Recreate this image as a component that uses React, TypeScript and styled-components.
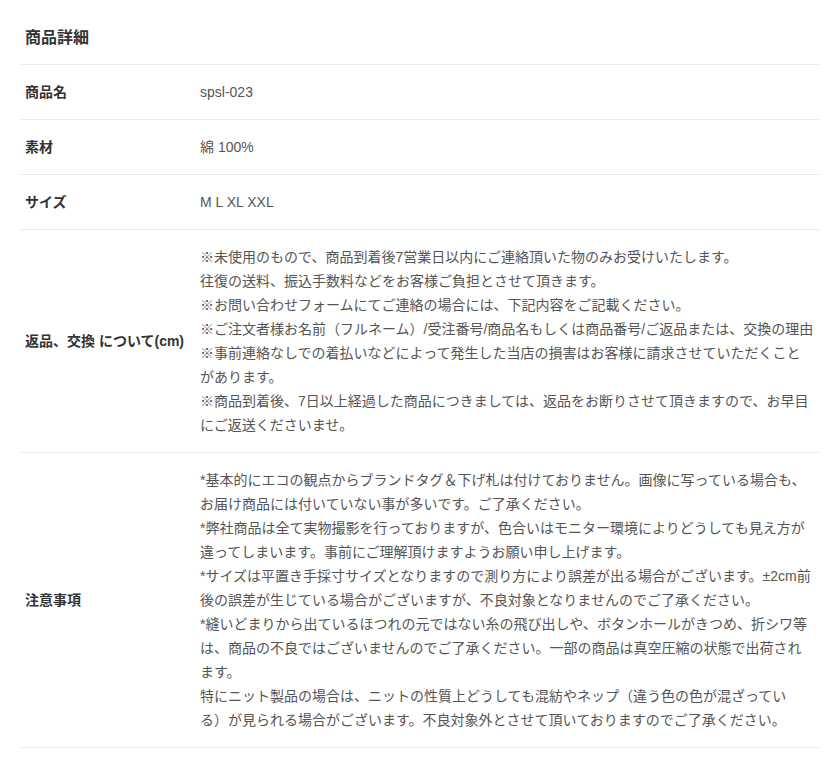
import * as React from 'react';
import styled, { createGlobalStyle } from 'styled-components';

const GlobalStyle = createGlobalStyle`
  html, body {
    margin: 0;
    padding: 0;
    background: #ffffff;
  }
  body {
    font-family: "Liberation Sans", "Noto Sans CJK JP", sans-serif;
    color: #333333;
  }
`;

const DetailWrapper = styled.section`
  margin: 0 20px;
  width: 800px;
`;

const DetailTitle = styled.h2`
  margin: 0;
  padding: 26px 5px 14px;
  font-size: 16px;
  line-height: 24px;
  font-weight: 700;
  color: #333333;
  border-bottom: 1px solid #ebebeb;
`;

const DetailRow = styled.div`
  display: grid;
  grid-template-columns: 175px 1fr;
  align-items: center;
  padding: 15px 5px 15px 5px;
  border-bottom: 1px solid #ebebeb;
`;

const RowLabel = styled.div`
  font-size: 14px;
  line-height: 24px;
  font-weight: 700;
  color: #333333;
  white-space: nowrap;
`;

const RowValue = styled.div`
  font-size: 14px;
  line-height: 24px;
  color: #555555;
  .line {
    white-space: nowrap;
  }
`;

interface Item {
  label: string;
  lines: string[];
};

const items: Item[] = [
  { label: '商品名', lines: ['spsl-023'] },
  { label: '素材', lines: ['綿 100%'] },
  { label: 'サイズ', lines: ['M L XL XXL'] },
  {
    label: '返品、交換 について(cm)',
    lines: [
      '※未使用のもので、商品到着後7営業日以内にご連絡頂いた物のみお受けいたします。',
      '往復の送料、振込手数料などをお客様ご負担とさせて頂きます。',
      '※お問い合わせフォームにてご連絡の場合には、下記内容をご記載ください。',
      '※ご注文者様お名前（フルネーム）/受注番号/商品名もしくは商品番号/ご返品または、交換の理由',
      '※事前連絡なしでの着払いなどによって発生した当店の損害はお客様に請求させていただくこと',
      'があります。',
      '※商品到着後、7日以上経過した商品につきましては、返品をお断りさせて頂きますので、お早目',
      'にご返送くださいませ。',
    ],
  },
  {
    label: '注意事項',
    lines: [
      '*基本的にエコの観点からブランドタグ＆下げ札は付けておりません。画像に写っている場合も、',
      'お届け商品には付いていない事が多いです。ご了承ください。',
      '*弊社商品は全て実物撮影を行っておりますが、色合いはモニター環境によりどうしても見え方が',
      '違ってしまいます。事前にご理解頂けますようお願い申し上げます。',
      '*サイズは平置き手採寸サイズとなりますので測り方により誤差が出る場合がございます。±2cm前',
      '後の誤差が生じている場合がございますが、不良対象となりませんのでご了承ください。',
      '*縫いどまりから出ているほつれの元ではない糸の飛び出しや、ボタンホールがきつめ、折シワ等',
      'は、商品の不良ではございませんのでご了承ください。一部の商品は真空圧縮の状態で出荷され',
      'ます。',
      '特にニット製品の場合は、ニットの性質上どうしても混紡やネップ（違う色の色が混ざってい',
      'る）が見られる場合がございます。不良対象外とさせて頂いておりますのでご了承ください。',
    ],
  },
];

const App: React.FC = () => {
  return (
    <>
      <GlobalStyle />
      <DetailWrapper>
        <DetailTitle>商品詳細</DetailTitle>
        {items.map((item) => (
          <DetailRow key={item.label}>
            <RowLabel>{item.label}</RowLabel>
            <RowValue>
              {item.lines.map((line, i) => (
                <div className="line" key={i}>{line}</div>
              ))}
            </RowValue>
          </DetailRow>
        ))}
      </DetailWrapper>
    </>
  );
};

export default App;
